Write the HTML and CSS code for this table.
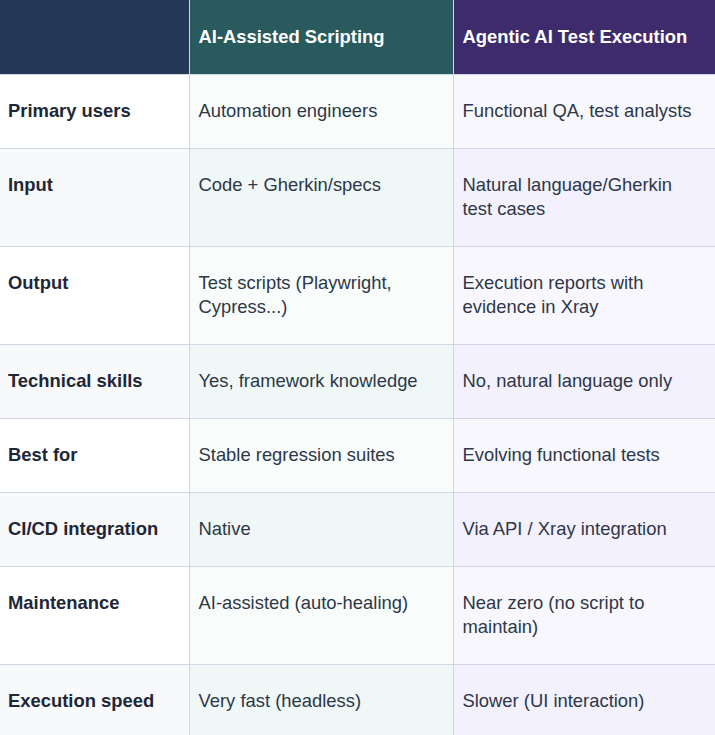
FILE: index.html
```html
<!DOCTYPE html>
<html lang="en">
<head>
<meta charset="utf-8">
<title>Comparison</title>
<link rel="stylesheet" href="styles.css">
</head>
<body>
<table class="cmp">
  <colgroup>
    <col class="c-label">
    <col class="c-script">
    <col class="c-agent">
  </colgroup>
  <thead>
    <tr>
      <th class="h-label"></th>
      <th class="h-script">AI-Assisted Scripting</th>
      <th class="h-agent">Agentic AI Test Execution</th>
    </tr>
  </thead>
  <tbody>
    <tr>
      <td class="label">Primary users</td>
      <td class="script">Automation engineers</td>
      <td class="agent">Functional QA, test analysts</td>
    </tr>
    <tr>
      <td class="label">Input</td>
      <td class="script">Code + Gherkin/specs</td>
      <td class="agent">Natural language/Gherkin test cases</td>
    </tr>
    <tr>
      <td class="label">Output</td>
      <td class="script">Test scripts (Playwright, Cypress...)</td>
      <td class="agent">Execution reports with evidence in Xray</td>
    </tr>
    <tr>
      <td class="label">Technical skills</td>
      <td class="script">Yes, framework knowledge</td>
      <td class="agent">No, natural language only</td>
    </tr>
    <tr>
      <td class="label">Best for</td>
      <td class="script">Stable regression suites</td>
      <td class="agent">Evolving functional tests</td>
    </tr>
    <tr>
      <td class="label">CI/CD integration</td>
      <td class="script">Native</td>
      <td class="agent">Via API / Xray integration</td>
    </tr>
    <tr>
      <td class="label">Maintenance</td>
      <td class="script">AI-assisted (auto-healing)</td>
      <td class="agent">Near zero (no script to maintain)</td>
    </tr>
    <tr>
      <td class="label">Execution speed</td>
      <td class="script">Very fast (headless)</td>
      <td class="agent">Slower (UI interaction)</td>
    </tr>
  </tbody>
</table>
</body>
</html>
```

FILE: styles.css
```css
html, body {
  margin: 0;
  padding: 0;
  background: #ffffff;
}

body {
  font-family: "Liberation Sans", Arial, sans-serif;
  font-size: 18.4px;
  line-height: 24px;
  color: #2d3748;
  overflow: hidden;
}

.cmp {
  border-collapse: collapse;
  table-layout: fixed;
  width: 717px;
}

.c-label { width: 189px; }
.c-script { width: 264px; }
.c-agent { width: 264px; }

.cmp th,
.cmp td {
  border: 1px solid #d0d7e2;
  padding: 24px 14px 25px 9px;
  text-align: left;
  vertical-align: top;
}

.cmp tr > :first-child {
  border-left: none;
  padding-left: 8px;
}

.cmp thead th {
  border-top: none;
  padding-top: 25px;
  padding-bottom: 25px;
  color: #ffffff;
  font-weight: bold;
}

.h-label { background: #253858; }
.h-script { background: #285a5e; }
.h-agent { background: #3d2b6c; }

.label {
  font-weight: bold;
  color: #1e2737;
  background: #ffffff;
}
.script { background: #f8fdfc; }
.agent { background: #f8f7fe; }

tbody tr:nth-child(even) .label { background: #f7f9fb; }
tbody tr:nth-child(even) .script { background: #f0f8f7; }
tbody tr:nth-child(even) .agent { background: #f3f1fd; }
```
